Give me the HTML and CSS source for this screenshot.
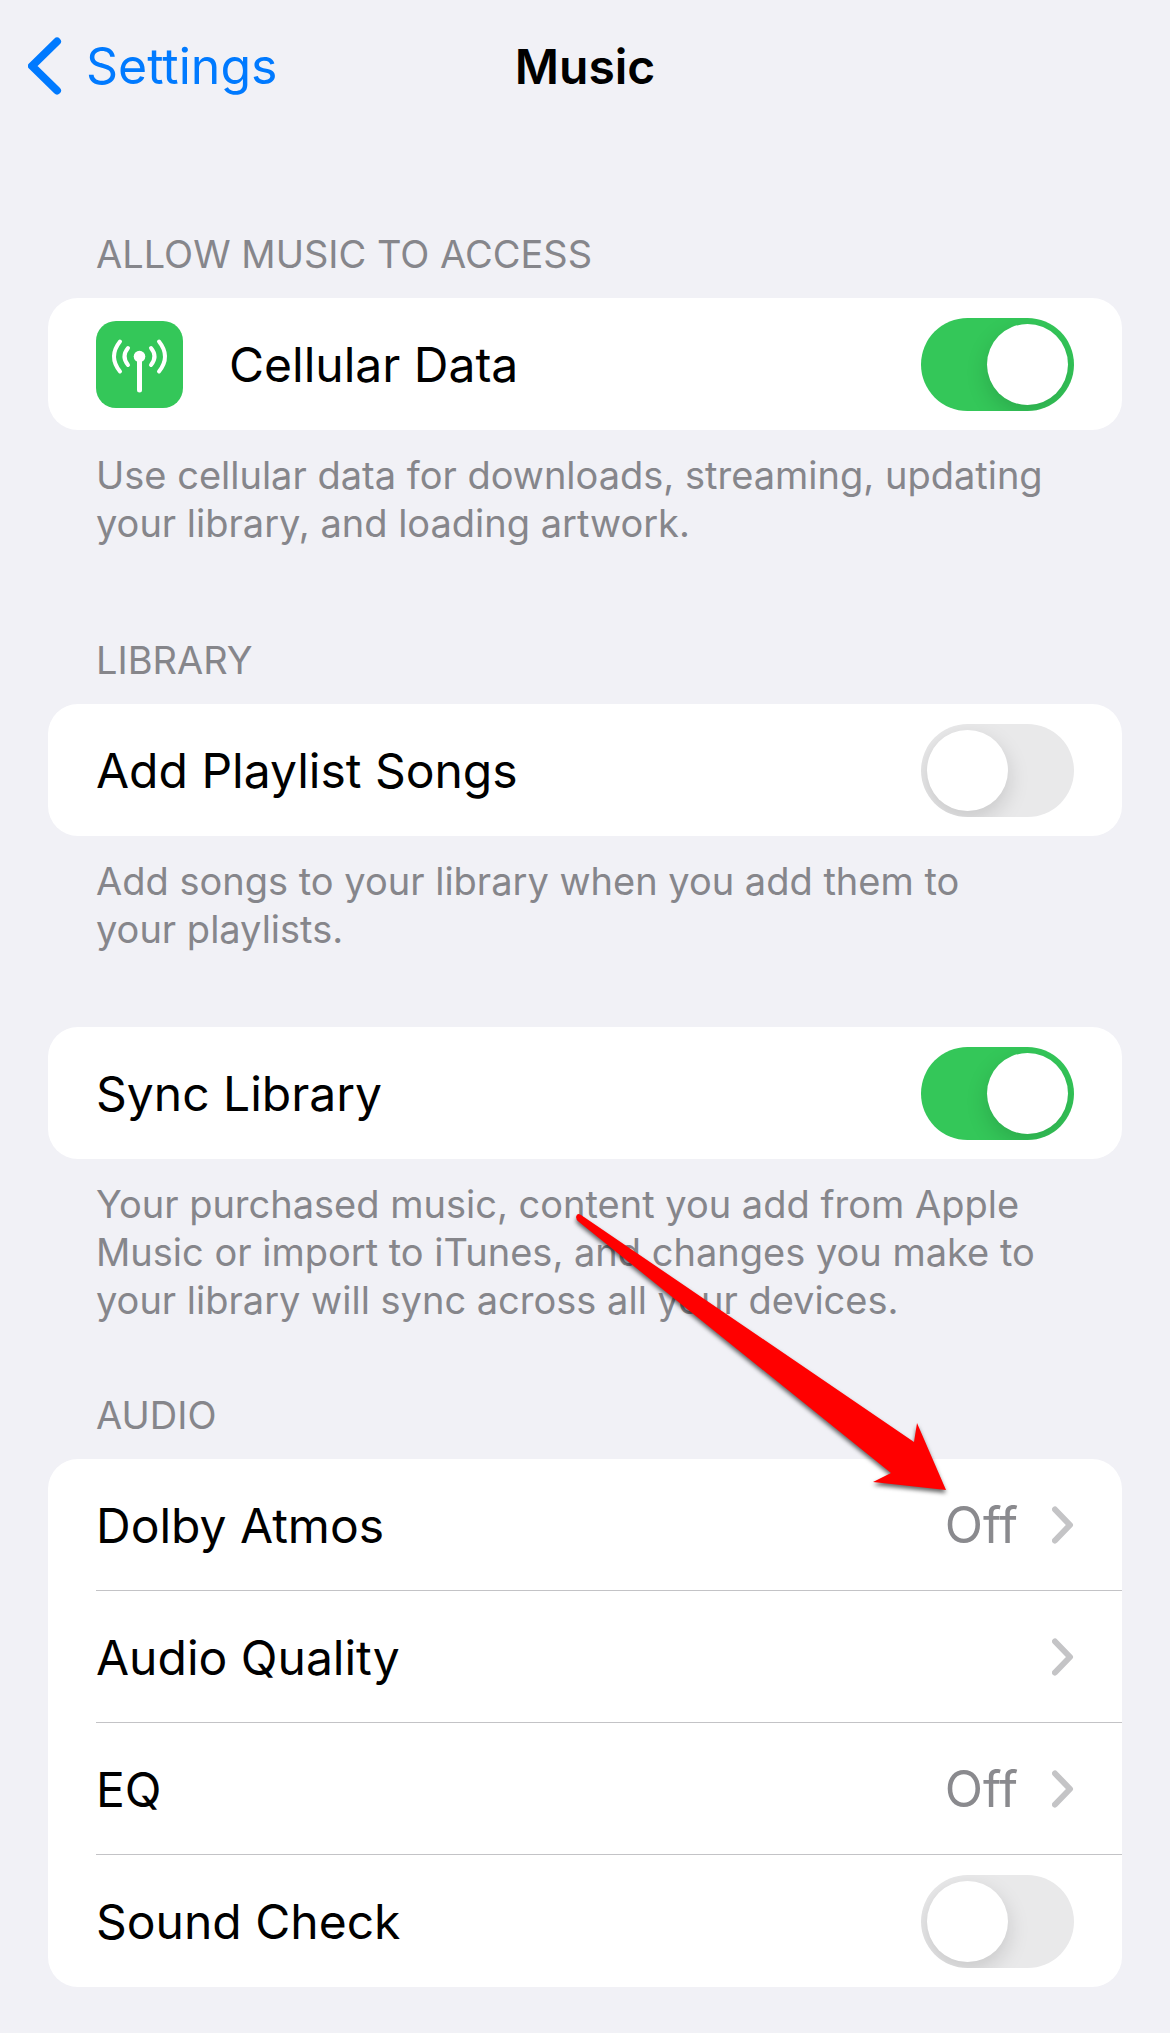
FILE: index.html
```
<!DOCTYPE html>
<html lang="en">
<head>
    <meta charset="UTF-8">
    <meta name="viewport" content="width=device-width, initial-scale=1.0">
    <title>Music</title>
    <link rel="stylesheet" href="styles.css">
</head>
<body>
    <header class="navbar">
        <a href="#" class="back-link">
            <svg class="back-icon" width="34" height="58" viewBox="0 0 34 58" aria-hidden="true">
                <path d="M29 4.5 L4 29 L29 53.5" />
            </svg>
            Settings
        </a>
        <h1>Music</h1>
    </header>

    <main>
        <section class="group">
            <h2>ALLOW MUSIC TO ACCESS</h2>
            <div class="card">
                <label class="row">
                    <svg class="app-icon" width="87" height="87" viewBox="0 0 87 87" aria-hidden="true">
                        <rect width="87" height="87" rx="20" fill="#34c759" />
                        <circle cx="43.5" cy="35.5" r="5.8" fill="#fff" />
                        <g class="waves">
                            <path class="mast" d="M43.5 37 V69" />
                            <path d="M32 27 Q25 35.5 32 44" />
                            <path d="M55 27 Q62 35.5 55 44" />
                            <path d="M24 20.5 Q12 35.5 24 50.5" />
                            <path d="M63 20.5 Q75 35.5 63 50.5" />
                        </g>
                    </svg>
                    <span class="label">Cellular Data</span>
                    <input type="checkbox" role="switch" class="switch" checked>
                </label>
            </div>
            <p class="note">Use cellular data for downloads, streaming, updating<br>your library, and loading artwork.</p>
        </section>

        <section class="group library">
            <h2>LIBRARY</h2>
            <div class="card">
                <label class="row">
                    <span class="label">Add Playlist Songs</span>
                    <input type="checkbox" role="switch" class="switch">
                </label>
            </div>
            <p class="note">Add songs to your library when you add them to<br>your playlists.</p>
        </section>

        <section class="group sync">
            <div class="card">
                <label class="row">
                    <span class="label">Sync Library</span>
                    <input type="checkbox" role="switch" class="switch" checked>
                </label>
            </div>
            <p class="note">Your purchased music, content you add from Apple<br>Music or import to iTunes, and changes you make to<br>your library will sync across all your devices.</p>
        </section>

        <section class="group audio">
            <h2>AUDIO</h2>
            <div class="card">
                <a href="#" class="row">
                    <span class="label">Dolby Atmos</span>
                    <span class="value">Off</span>
                    <svg class="chevron" width="22" height="38" viewBox="0 0 22 38" aria-hidden="true"><path d="M3 3.5 L18 19 L3 34.5" /></svg>
                </a>
                <a href="#" class="row">
                    <span class="label">Audio Quality</span>
                    <svg class="chevron" width="22" height="38" viewBox="0 0 22 38" aria-hidden="true"><path d="M3 3.5 L18 19 L3 34.5" /></svg>
                </a>
                <a href="#" class="row">
                    <span class="label">EQ</span>
                    <span class="value">Off</span>
                    <svg class="chevron" width="22" height="38" viewBox="0 0 22 38" aria-hidden="true"><path d="M3 3.5 L18 19 L3 34.5" /></svg>
                </a>
                <label class="row">
                    <span class="label">Sound Check</span>
                    <input type="checkbox" role="switch" class="switch">
                </label>
                <!-- arrow pointing at the Dolby Atmos value -->
                <svg class="arrow" width="390" height="300" viewBox="0 0 390 300" aria-hidden="true">
                    <path d="M11 6 Q7 3 6 8 Q6 11 9 13 L321 264 L303 273 L376 281 L347 214 L344 233 Z" />
                </svg>
            </div>
        </section>
    </main>
</body>
</html>
```
FILE: styles.css
```
* {
    box-sizing: border-box;
}
body {
    margin: 0;
    background: #f1f1f6;
    color: #000;
    font-family: Inter, 'Liberation Sans', sans-serif;
    font-size: 48px;
}
a {
    color: inherit;
    text-decoration: none;
}
h1, h2, p {
    margin: 0;
}
.navbar {
    display: grid;
    grid-template-columns: 1fr auto 1fr;
    align-items: center;
    height: 132px;
    padding: 0 28px;
}
.back-link {
    display: flex;
    align-items: center;
    gap: 24px;
    color: #007aff;
    font-size: 50px;
}
.back-icon {
    fill: none;
    stroke: #007aff;
    stroke-width: 8;
    stroke-linecap: round;
    stroke-linejoin: round;
}
h1 {
    font-size: 48px;
    font-weight: 600;
}
main {
    padding: 98px 48px 46px;
}
h2, .note {
    padding: 0 48px;
    color: #86868b;
    font-size: 38px;
    font-weight: 400;
    line-height: 48px;
}
h2 {
    padding-bottom: 20px;
}
.note {
    padding-top: 21px;
}
.library {
    margin-top: 89px;
}
.sync {
    margin-top: 74px;
}
.audio {
    margin-top: 67px;
}
.card {
    position: relative;
    background: #fff;
    border-radius: 30px;
}
.row {
    position: relative;
    display: flex;
    align-items: center;
    height: 132px;
    padding: 0 48px;
}
.row + .row::before {
    content: '';
    position: absolute;
    top: -1px;
    left: 48px;
    right: 0;
    height: 1px;
    background: #c3c3c6;
}
.label {
    flex: 1;
}
.app-icon {
    margin-right: 46px;
}
.waves {
    fill: none;
    stroke: #fff;
    stroke-width: 4;
    stroke-linecap: round;
}
.mast {
    stroke-width: 5;
}
.value {
    color: #8a8a8e;
    font-size: 50px;
    margin-right: 34px;
}
.chevron {
    fill: none;
    stroke: #c4c4c6;
    stroke-width: 6;
    stroke-linecap: round;
    stroke-linejoin: round;
}
.switch {
    appearance: none;
    width: 153px;
    height: 93px;
    margin: 0;
    padding: 6px;
    border-radius: 47px;
    background: #e9e9ea;
    overflow: hidden;
    cursor: pointer;
}
.switch::before {
    content: '';
    display: block;
    width: 81px;
    height: 81px;
    border-radius: 50%;
    background: #fff;
    box-shadow: 0 8px 22px rgba(0, 0, 0, 0.15);
}
.switch:checked {
    background: #34c759;
}
.switch:checked::before {
    margin-left: auto;
}
.arrow {
    position: absolute;
    top: -250px;
    right: 162px;
    fill: #f00;
    filter: drop-shadow(0 3px 2px rgba(0, 0, 0, 0.6));
    pointer-events: none;
}
```
